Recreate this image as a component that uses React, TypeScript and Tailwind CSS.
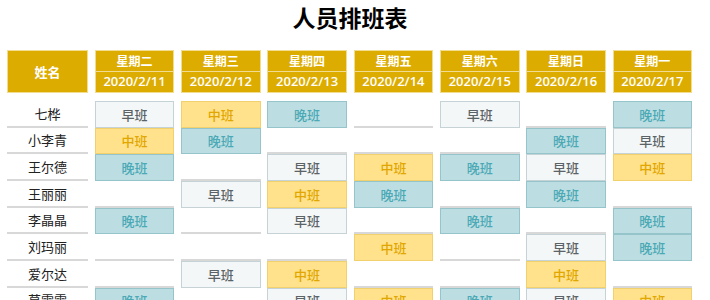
import React from "react";

type Shift = "早" | "中" | "晚" | "";

const DAYS = [
  { day: "星期二", date: "2020/2/11" },
  { day: "星期三", date: "2020/2/12" },
  { day: "星期四", date: "2020/2/13" },
  { day: "星期五", date: "2020/2/14" },
  { day: "星期六", date: "2020/2/15" },
  { day: "星期日", date: "2020/2/16" },
  { day: "星期一", date: "2020/2/17" },
];

// 每行: 姓名 + 七天的班次
const ROWS: { name: string; shifts: Shift[] }[] = [
  { name: "七桦", shifts: ["早", "中", "晚", "", "早", "", "晚"] },
  { name: "小李青", shifts: ["中", "晚", "", "", "", "晚", "早"] },
  { name: "王尔德", shifts: ["晚", "", "早", "中", "晚", "早", "中"] },
  { name: "王丽丽", shifts: ["", "早", "中", "晚", "", "晚", ""] },
  { name: "李晶晶", shifts: ["晚", "", "早", "", "晚", "", "晚"] },
  { name: "刘玛丽", shifts: ["", "", "", "中", "", "早", "晚"] },
  { name: "爱尔达", shifts: ["", "早", "中", "", "", "中", ""] },
  { name: "莫雪雪", shifts: ["晚", "", "早", "中", "晚", "早", "中"] },
];

const font = { fontFamily: '"Noto Sans CJK SC", "Noto Sans", sans-serif' };

function ShiftCell({ s }: { s: Shift }) {
  if (s === "早")
    return (
      <div className="h-[26.67px] flex items-center justify-center border border-[#c6d3d6] bg-[#f4f7f8] text-[#5b6366] text-[13px] font-medium">
        早班
      </div>
    );
  if (s === "中")
    return (
      <div className="h-[26.67px] flex items-center justify-center border border-[#f0d16e] bg-[#ffe28b] text-[#e2a600] text-[13px] font-medium">
        中班
      </div>
    );
  if (s === "晚")
    return (
      <div className="h-[26.67px] flex items-center justify-center border border-[#96c4cb] bg-[#bcdde2] text-[#4aa9b5] text-[13px] font-medium">
        晚班
      </div>
    );
  return <div className="h-[26.67px] border-b-2 border-[#d8d8d8]" />;
}

export default function App() {
  return (
    <div className="w-[700px] bg-white" style={font}>
      <h1 className="h-[34px] leading-[34px] text-center text-[23px] font-bold text-black">
        人员排班表
      </h1>

      <div className="mt-[16px] pl-[7px] grid grid-cols-[81px_repeat(7,79.67px)] gap-x-[6.67px]">
        {/* 表头 */}
        <div className="h-[43px] flex items-center justify-center bg-[#ddac00] border border-[#f1dc90] text-white text-[13px] font-bold">
          姓名
        </div>
        {DAYS.map((d) => (
          <div key={d.date} className="h-[43px] flex flex-col bg-[#ddac00] border border-[#f1dc90] text-white">
            <div className="flex-1 flex items-center justify-center border-b border-[#f1dc90] text-[12px] font-bold">
              {d.day}
            </div>
            <div
              className="flex-1 flex items-center justify-center text-[13px] font-semibold"
              style={{ fontFamily: '"Open Sans", "Noto Sans", sans-serif' }}
            >
              {d.date}
            </div>
          </div>
        ))}

        <div className="col-span-8 h-[8px]" />

        {/* 数据行 */}
        {ROWS.map((r) => (
          <React.Fragment key={r.name}>
            <div className="h-[26.67px] flex items-center justify-center border-b-2 border-[#d8d8d8] text-[13px] text-[#222]">
              {r.name}
            </div>
            {r.shifts.map((s, i) => (
              <ShiftCell key={i} s={s} />
            ))}
          </React.Fragment>
        ))}
      </div>
    </div>
  );
}
